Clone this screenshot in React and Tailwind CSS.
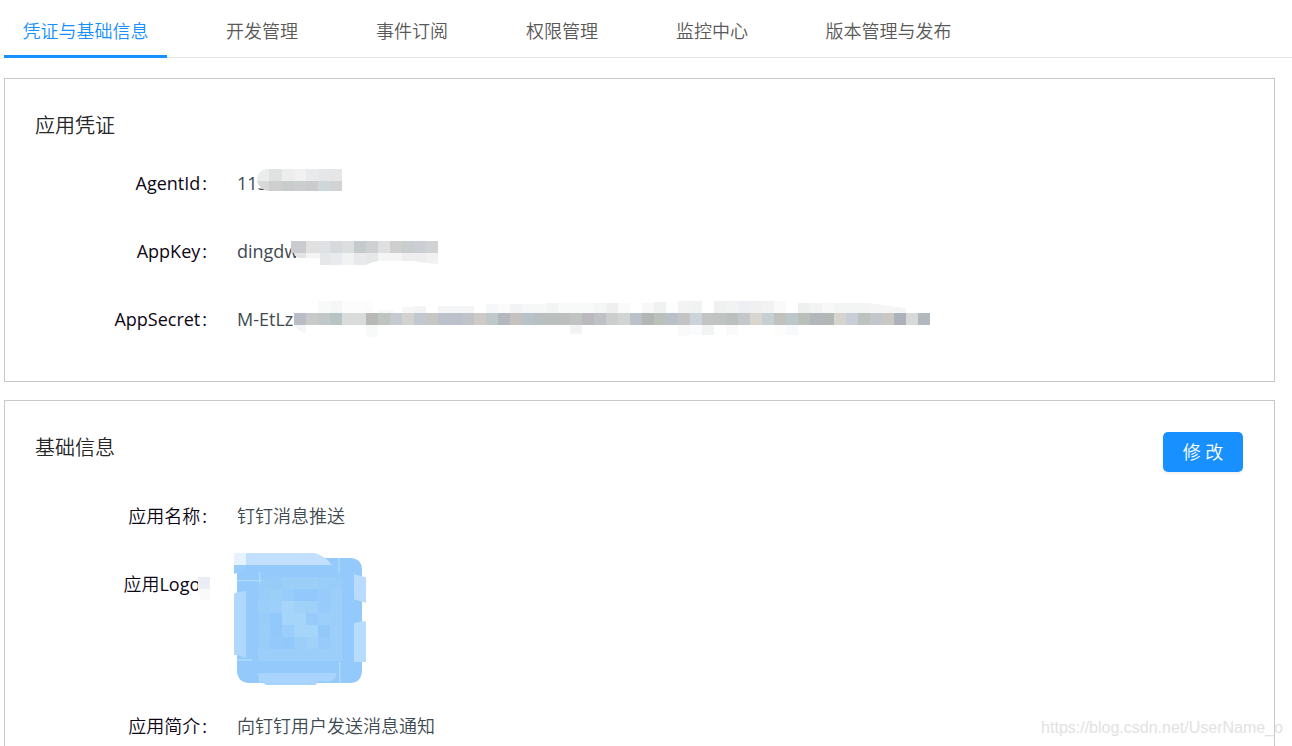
import React, { useState } from 'react'

const tabs = ['凭证与基础信息', '开发管理', '事件订阅', '权限管理', '监控中心', '版本管理与发布']

// [x, y, width, height, fill]
const agentCells = [
    [12, 0, 13, 12, '#dfe2e1'], [25, 0, 12, 12, '#ededed'], [37, 0, 12, 12, '#f1f1f1'], [49, 0, 12, 12, '#e9eaeb'],
    [61, 0, 12, 12, '#e5e7e9'], [73, 0, 12, 12, '#e6e6e7'],
    [12, 12, 13, 10, '#cfcfcf'], [25, 12, 12, 10, '#c8cccc'], [37, 12, 12, 10, '#cbcdcf'], [49, 12, 12, 10, '#cacbcc'],
    [61, 12, 12, 10, '#d0d7db'], [73, 12, 12, 10, '#d2d3d4'],
]

const keyCells = [
    [0, 0, 15, 12, '#c9cbd0'], [15, 0, 14, 12, '#e1e1e1'], [29, 0, 10, 12, '#dfe2e4'], [39, 0, 12, 12, '#d7d9dc'],
    [51, 0, 12, 12, '#dbdfe0'], [63, 0, 12, 12, '#c5cacd'], [75, 0, 12, 12, '#ced1d2'], [87, 0, 12, 12, '#dfe0e2'],
    [99, 0, 12, 12, '#cfcfd0'], [111, 0, 12, 12, '#c9cdce'], [123, 0, 12, 12, '#cbced5'], [135, 0, 12, 12, '#d1d2d4'],
    [29, 12, 10, 12, '#e6e7e8'], [39, 12, 12, 12, '#e8ebed'], [51, 12, 12, 12, '#f0f3f2'], [63, 12, 12, 12, '#e8e9eb'],
]

const secretRow = [
    '#bbbdc6', '#c8cac9', '#c2c7c8', '#b8c3c3', '#dadcdb', '#dadcdb', '#b8b8b6', '#c0c4c0', '#c5c9d0', '#d2d2d1',
    '#c1c8d0', '#c6c6c4', '#bcc2cc', '#bcc0ca', '#c0c3c7', '#cecac7', '#c0c9c9', '#b2b8bd', '#c4c1bf', '#b7c3c9',
    '#b8c0c2', '#bbc0be', '#bdbfbe', '#c0c3c1', '#bbb8be', '#bfc2c5', '#cccecd', '#d2d4d3', '#bbc1c8', '#b2b7b6',
    '#bcc0bb', '#bac0c7', '#c4c4c5', '#cdd3da', '#c1c4c2', '#c1c3c0', '#bcc0be', '#c4c8ca', '#d8d6cf', '#c6d0d3',
    '#c1c1bd', '#bdc7cb', '#b9c0bc', '#b3b7bb', '#b3b7b6', '#d6d4cf', '#c8ced8', '#bcc3bf', '#c3c7cb', '#cac8c2',
    '#adb1bb', '#d7dad8', '#b1b9bf',
]

const secretCells = [
    [24, 0, 12, 12, '#f8f9f9'], [36, 0, 12, 12, '#f5f7f7'], [48, 0, 24, 12, '#fcfcfc'], [84, 9, 16, 3, '#f7f8f8'],
    [108, 6, 12, 6, '#f6f6f6'], [120, 5, 12, 7, '#f4f4f6'], [144, 5, 36, 7, '#f4f5f6'],
    [192, 3, 12, 9, '#f6f7f8'], [204, 3, 12, 9, '#fbfbfb'], [216, 3, 12, 9, '#f1f3f4'], [228, 3, 24, 9, '#f6f7f7'],
    [252, 2, 12, 10, '#f3f4f4'], [264, 2, 36, 10, '#f8f9f9'], [300, 2, 12, 10, '#f4f5f5'], [312, 2, 12, 10, '#efefef'],
    [324, 2, 12, 10, '#fafafa'], [348, 2, 12, 10, '#f8f8f8'], [360, 1, 12, 11, '#eff2f1'], [372, 1, 12, 11, '#fbfefd'],
    [384, 0, 12, 12, '#f2f3f2'], [396, 0, 12, 12, '#f0f3f2'], [420, 0, 12, 12, '#f0f0f0'], [432, 0, 12, 12, '#f1f2f2'],
    [444, 0, 12, 12, '#eeeff2'], [456, 0, 12, 12, '#f1f0f0'], [468, 0, 12, 12, '#f1f3f2'], [480, 0, 12, 12, '#fafafa'],
    [504, 2, 12, 10, '#eeefef'], [516, 2, 12, 10, '#f2f3f3'], [528, 2, 12, 10, '#f8f8f9'], [540, 2, 36, 10, '#f3f4f4'],
    [72, 24, 12, 12, '#f8faf9'], [276, 24, 12, 9, '#f3f3f4'], [384, 24, 12, 11, '#fafafa'], [396, 24, 12, 10, '#f9fbfe'],
    [408, 24, 12, 10, '#f1f4f2'], [432, 24, 12, 10, '#fafafa'], [480, 24, 12, 11, '#fdfdfb'], [492, 24, 12, 10, '#f7fafc'],
]

const logoCells = [
    [99, 110, 73, 37, '#98ccf8'], [172, 110, 108, 37, '#9bcff8'], [280, 110, 72, 37, '#98cdf9'],
    [99, 147, 36, 36, '#98ccf9'], [135, 147, 36, 36, '#9acff8'], [171, 147, 36, 36, '#98ccfa'], [207, 147, 72, 36, '#92c8fb'],
    [279, 147, 36, 36, '#98cbfb'], [315, 147, 36, 216, '#9bcef9'],
    [99, 183, 36, 36, '#9bcff9'], [135, 183, 36, 36, '#9ccff9'], [171, 183, 36, 36, '#a7d5f9'], [207, 183, 36, 36, '#a0d1f8'],
    [243, 183, 36, 36, '#9fd1f8'], [279, 183, 36, 36, '#97cbfb'],
    [99, 219, 36, 36, '#98cdfa'], [135, 219, 36, 36, '#92c8fb'], [171, 219, 72, 36, '#a6d5fa'], [243, 219, 36, 36, '#98cbfa'],
    [279, 219, 36, 36, '#9ccffa'],
    [99, 255, 36, 36, '#99cdfa'], [135, 255, 36, 36, '#93c8fb'], [171, 255, 36, 36, '#9bcefa'], [207, 255, 72, 36, '#a6d5fa'],
    [279, 255, 36, 36, '#93c8fb'],
    [99, 291, 36, 36, '#98cdf9'], [135, 291, 36, 36, '#93c9fb'], [171, 291, 36, 36, '#93c8fb'], [207, 291, 36, 36, '#9bcffa'],
    [243, 291, 36, 36, '#a0d1f9'], [279, 291, 36, 36, '#98cbfb'],
    [99, 327, 216, 36, '#9bcef9'],
]

const Cells = ({ cells }) => (
    <>
        {cells.map(([x, y, w, h, fill], i) => (
            <rect key={i} x={x} y={y} width={w} height={h} fill={fill} />
        ))}
    </>
)

const AgentMask = () => (
    <svg className="absolute left-5 top-5" width="85" height="22" viewBox="0 0 85 22" aria-hidden="true">
        <path d="M12 0H9Q2 2 0 8V12H12Z" fill="#ebecec" />
        <path d="M0 12H12V22H11Q3 21 0 12Z" fill="#d8d8d8" />
        <Cells cells={agentCells} />
    </svg>
)

const KeyMask = () => (
    <svg className="absolute left-[54px] top-6" width="147" height="24" viewBox="0 0 147 24" aria-hidden="true">
        <g shapeRendering="crispEdges">
            <path d="M3 12H15V17H8Q4 16 3 12Z" fill="#e3e4e6" />
            <path d="M15 12H29V17H15Z" fill="#f4f4f5" />
            <Cells cells={keyCells} />
        </g>
        <path d="M75 12H87V20Q80 21 75 24Z" fill="#e6e7e7" />
        <path d="M87 12H111V20H87Z" fill="#f5f5f6" />
        <path d="M111 12H135V22L123 20H111Z" fill="#eeeeef" />
        <path d="M135 12H147V23L135 22Z" fill="#f1f1f2" />
    </svg>
)

const SecretMask = () => (
    <svg className="absolute left-[57px] top-4" width="636" height="36" viewBox="0 0 636 36" shapeRendering="crispEdges" aria-hidden="true">
        <path d="M72 0Q79 1 80 12H72Z" fill="#fafbfb" />
        <path d="M0 24H12V32Q3 30 0 24Z" fill="#f5f7f7" />
        <path d="M576 12V2Q600 6 612 7V12Z" fill="#f5f5f5" />
        <Cells cells={secretCells} />
        {secretRow.map((fill, i) => (
            <rect key={i} x={i * 12} y="12" width="12" height="12" fill={fill} />
        ))}
    </svg>
)

const LabelMask = () => (
    <svg className="absolute -right-[3px] top-[27px]" width="12" height="23" viewBox="0 0 12 23" aria-hidden="true">
        <rect width="12" height="12" fill="#ebedf4" />
        <path d="M0 12H12V23H3Q0 18 0 12Z" fill="#fafafb" />
    </svg>
)

const AppLogo = () => (
    <svg className="-ml-[3px] block" width="132" height="132" viewBox="27 39 396 396" role="img" aria-label="应用Logo">
        <path d="M72 54H375Q411 56 411 90V393Q409 429 375 429H72Q38 427 36 393V90Q38 56 72 54Z" fill="#93c9fb" />
        <path d="M27 75H63V96L36 99L27 102Z" fill="#98ccfb" />
        <path d="M63 39H270Q302 49 321 75H63Z" fill="#c2e0fd" />
        <path d="M27 39H63V75H27Z" fill="#e6f2fe" />
        <path d="M27 162L36 156L63 153V354L36 345H27Z" fill="#b0d8fd" />
        <path d="M387 103L423 112V189L411 185L387 178Z" fill="#b9dcfe" />
        <path d="M411 185L423 189V243L411 245Z" fill="#fff" />
        <path d="M387 250L411 244H423V366H387Z" fill="#b8dcfe" />
        <g shapeRendering="crispEdges">
            <Cells cells={logoCells} />
        </g>
        <path d="M97 399H336Q334 424 300 426L285 422L270 435H124Q101 424 97 399Z" fill="#a8d4fd" />
        <path d="M99 110H120L99 137Z" fill="#93c9fb" />
        <path d="M36 122H111M104 96V130M342 54V98M36 360H81M344 367V429M104 410V429" stroke="#aedcfc" strokeWidth="4" fill="none" />
        <path d="M48 271L59 277" stroke="#a1d1fc" strokeWidth="2" />
    </svg>
)

const Card = ({ title, action, className, children }) => (
    <section className={`mr-[17px] border border-[#c8c8c8] pl-[30px] pr-[31px] pt-[31px] ${className}`}>
        <div className="flex items-start justify-between">
            <h2 className="text-[20px] leading-8 text-[#262626]">{title}</h2>
            {action}
        </div>
        <dl className="mt-[7px]">{children}</dl>
    </section>
)

const Row = ({ label, mask, children }) => (
    <div className="flex items-start gap-[30px]">
        <dt className="relative w-[172px] shrink-0 text-right leading-[68px] text-[#0d0615]">
            {label}<span className="ml-[2px] font-medium">:</span>
            {mask}
        </dt>
        <dd className="relative min-w-0 leading-[68px] text-[#404a52]">{children}</dd>
    </div>
)

const Latin = ({ children }) => <span className="font-normal">{children}</span>

const App = () => {

    const [active, setActive] = useState(0)

    return (
        <div className="relative flex h-screen flex-col overflow-hidden bg-white pl-1 font-['Open_Sans','Noto_Sans_CJK_SC',sans-serif] text-[18px] font-[350]">
            <nav className="flex h-[58px] shrink-0 gap-10 border-b border-[#e8e8e8]" role="tablist">
                {tabs.map((tab, i) => (
                    <button
                        key={tab}
                        type="button"
                        role="tab"
                        aria-selected={active === i}
                        onClick={() => setActive(i)}
                        className={`-mb-px shrink-0 whitespace-nowrap border-b-3 pt-2 ${tab.length > 4 ? 'w-[163px]' : 'w-[110px]'} ${active === i ? 'border-[#1890ff] text-[#1890ff]' : 'border-transparent text-[#595959]'}`}
                    >
                        {tab}
                    </button>
                ))}
            </nav>

            <Card title="应用凭证" className="mt-5 shrink-0 pb-7">
                <Row label={<Latin>AgentId</Latin>}><Latin>115</Latin><AgentMask /></Row>
                <Row label={<Latin>AppKey</Latin>}><Latin>dingdw</Latin><KeyMask /></Row>
                <Row label={<Latin>AppSecret</Latin>}><Latin>M-EtLz</Latin><SecretMask /></Row>
            </Card>

            <Card
                title="基础信息"
                className="mt-[18px] grow border-b-0"
                action={
                    <button type="button" className="mb-[3px] h-10 w-20 rounded-[5px] bg-[#1890ff] text-white shadow-[0_2px_2px_rgba(0,0,0,0.05)]">
                        修 改
                    </button>
                }
            >
                <Row label="应用名称">钉钉消息推送</Row>
                <Row label={<>应用<Latin>Logo</Latin></>} mask={<LabelMask />}>
                    <div className="h-[142px] pt-[3px]"><AppLogo /></div>
                </Row>
                <Row label="应用简介">向钉钉用户发送消息通知</Row>
            </Card>

            <p className="absolute bottom-[6px] right-[9px] font-['Liberation_Sans',Arial,sans-serif] text-[16px] leading-6 font-normal text-[#e2e2e2]">
                https://blog.csdn.net/UserName_o
            </p>
        </div>
    )
}

export default App
